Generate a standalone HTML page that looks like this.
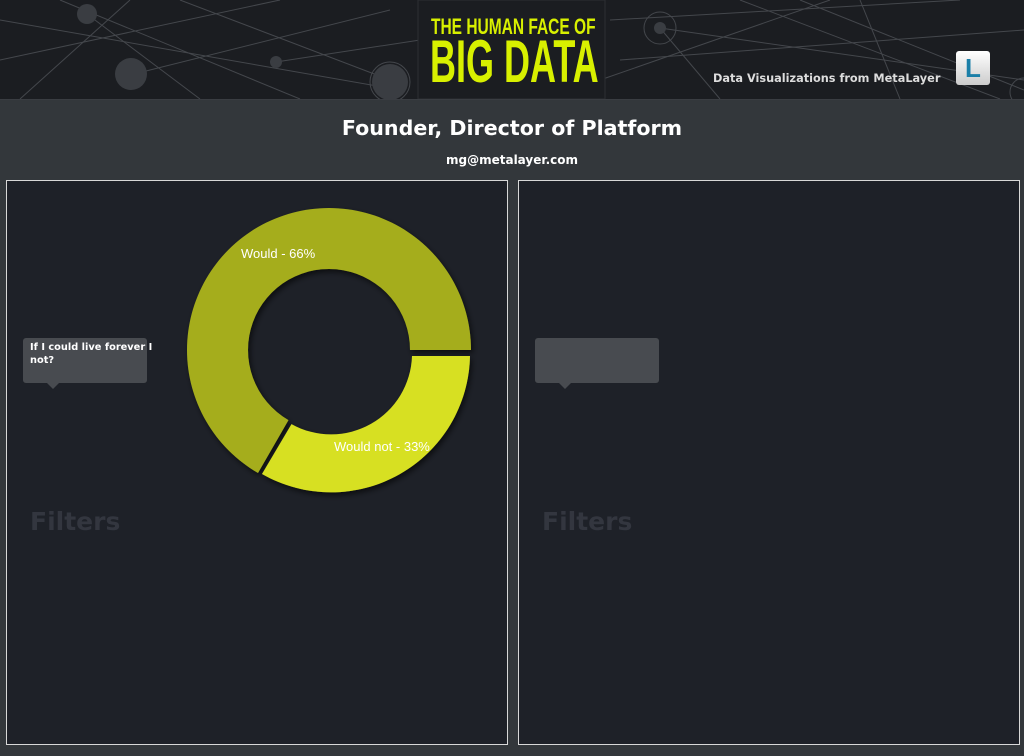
<!DOCTYPE html><html><head><style>
body{margin:0;width:1024px;height:756px;background:#33373b;font-family:"DejaVu Sans","Liberation Sans",sans-serif;overflow:hidden;position:relative}
.hdr{position:absolute;left:0;top:0;width:1024px;height:99px;background:#1b1d21;border-bottom:1px solid #3a3d42}
.t1{position:absolute;left:0;width:1024px;text-align:center;color:#fff;font-weight:bold}
.panel{position:absolute;top:180px;width:500px;height:563px;border:1px solid #d8d8d8;background:#1e2128}
.tip{position:absolute;left:16px;top:157px;width:124px;height:45px;background:#484b50;border-radius:3px;color:#fff;font-size:9.8px;font-weight:bold;line-height:13px;padding:3px 0 0 7px;box-sizing:border-box;white-space:nowrap}
.tip:after{content:"";position:absolute;left:24px;top:45px;border:6px solid transparent;border-top-color:#484b50;border-bottom:0}
.fil{position:absolute;left:23px;top:326px;color:#33363f;font-size:25px;font-weight:bold}
</style></head><body>
<div class="hdr">
<svg width="1024" height="99" style="position:absolute;left:0;top:0" stroke="#44474c" stroke-width="1" fill="none">
<line x1="0" y1="20" x2="400" y2="90"/><line x1="60" y1="0" x2="300" y2="99"/><line x1="130" y1="75" x2="390" y2="10"/><line x1="87" y1="14" x2="200" y2="99"/><line x1="0" y1="60" x2="280" y2="0"/><line x1="276" y1="62" x2="420" y2="40"/><line x1="180" y1="0" x2="390" y2="80"/><line x1="20" y1="99" x2="130" y2="0"/>
<line x1="660" y1="28" x2="1024" y2="80"/><line x1="610" y1="20" x2="960" y2="0"/><line x1="660" y1="28" x2="720" y2="99"/><line x1="800" y1="0" x2="1024" y2="90"/><line x1="860" y1="0" x2="900" y2="99"/><line x1="740" y1="0" x2="1000" y2="99"/><line x1="620" y1="60" x2="1024" y2="30"/><line x1="600" y1="80" x2="830" y2="0"/>
<circle cx="660" cy="28" r="16"/><circle cx="390" cy="82" r="20"/><circle cx="1024" cy="92" r="14"/>
<g fill="#3a3d42" stroke="none"><circle cx="87" cy="14" r="10"/><circle cx="131" cy="74" r="16"/><circle cx="276" cy="62" r="6"/><circle cx="390" cy="82" r="18"/><circle cx="660" cy="28" r="6"/></g>
<rect x="418" y="0" width="187" height="99" fill="#1b1d21" stroke="#2c2f33"/>
</svg>
<div style="position:absolute;left:431px;top:14px;color:#d8f000;font-family:'Liberation Sans',sans-serif;font-weight:bold;font-size:22px;transform:scaleX(.705);transform-origin:left;white-space:nowrap">THE HUMAN FACE OF</div>
<div style="position:absolute;left:430px;top:32px;color:#d8f000;font-family:'Liberation Sans',sans-serif;font-weight:bold;font-size:60px;line-height:60px;transform:scaleX(.6);transform-origin:left;white-space:nowrap">BIG DATA</div>
<div style="position:absolute;left:713px;top:72px;color:#ddd;font-size:11.3px;font-weight:bold;white-space:nowrap">Data Visualizations from MetaLayer</div>
<div style="position:absolute;left:956px;top:51px;width:34px;height:34px;background:linear-gradient(#fff,#ccc);border-radius:3px;color:#1b7fa8;font:bold 26px 'Liberation Sans',sans-serif;text-align:center;line-height:34px">L</div>
</div>
<div class="t1" style="top:116px;font-size:20.6px">Founder, Director of Platform</div>
<div class="t1" style="top:153px;font-size:12px">mg@metalayer.com</div>
<div class="panel" style="left:6px">
<div class="tip">If I could live forever I<br>not?</div>
<div class="fil">Filters</div>
</div>
<div class="panel" style="left:518px">
<div class="tip"></div>
<div class="fil">Filters</div>
</div>
<svg width="1024" height="756" style="position:absolute;left:0;top:0">
<defs><filter id="s" x="-20%" y="-20%" width="140%" height="140%"><feDropShadow dx="2" dy="3" stdDeviation="3" flood-color="#000" flood-opacity=".6"/></filter></defs>
<g filter="url(#s)">
<path d="M258 473 A142 142 0 1 1 471 350 L410 350 A81 81 0 1 0 288.5 420.1 Z" fill="#a5ad1c"/>
<path d="M470 356 A139 139 0 0 1 262 474 L291.5 424.1 A81 81 0 0 0 412 356 Z" fill="#d7e021"/>
</g>
<text x="241" y="258" fill="#fff" font-size="13" font-family="Liberation Sans,sans-serif">Would - 66%</text>
<text x="334" y="451" fill="#fff" font-size="13" font-family="Liberation Sans,sans-serif">Would not - 33%</text>
</svg>
</body></html>
